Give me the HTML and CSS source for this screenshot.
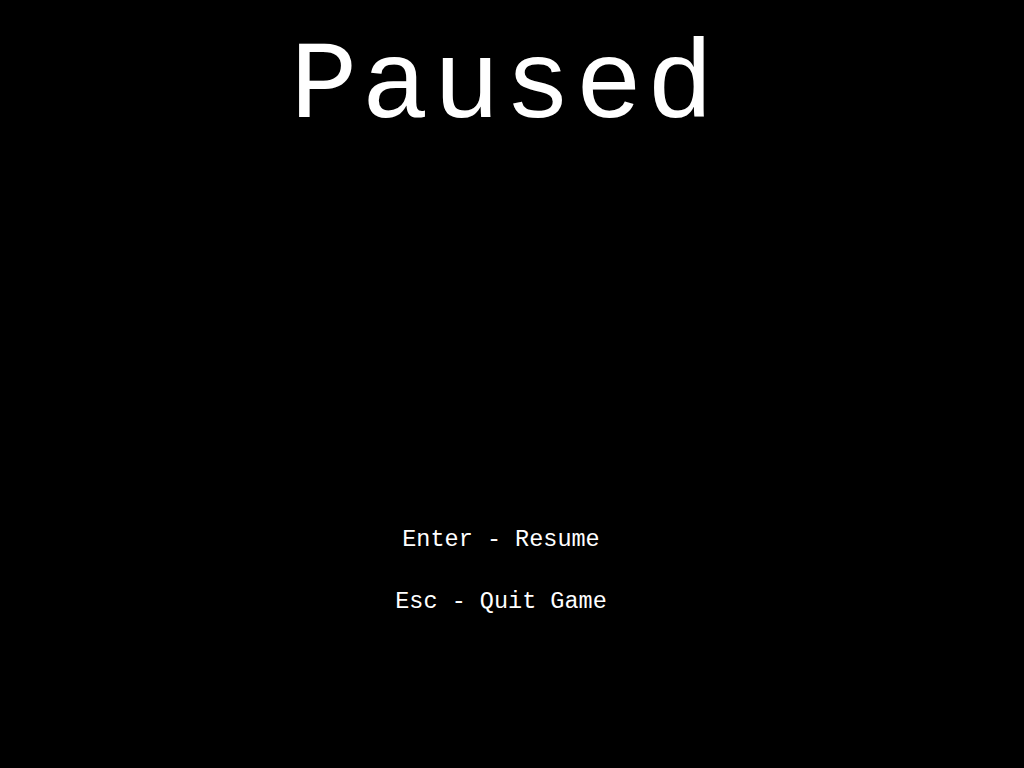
FILE: index.html
```html
<!DOCTYPE html>
<html lang="en">
<head>
<meta charset="utf-8">
<title>Paused</title>
<link rel="stylesheet" href="styles.css">
</head>
<body>
<main class="screen">
  <h1 class="title">Paused</h1>
  <ul class="menu">
    <li class="menu-item">Enter - Resume</li>
    <li class="menu-item">Esc - Quit Game</li>
  </ul>
</main>
</body>
</html>
```

FILE: styles.css
```css
html, body {
  margin: 0;
  padding: 0;
  background: #000;
  height: 100%;
}
.screen {
  display: flex;
  flex-direction: column;
  align-items: center;
  box-sizing: border-box;
  width: 1024px;
  height: 768px;
  padding-right: 22px;
  color: #fff;
  font-family: "Liberation Mono", "DejaVu Sans Mono", monospace;
  -webkit-font-smoothing: none;
}
.title {
  margin: 32px 0 0 0;
  padding-left: 6px;
  font-size: 112px;
  line-height: 1;
  letter-spacing: 4px;
  font-weight: normal;
}
.menu {
  list-style: none;
  margin: 384px 0 0 0;
  padding: 0;
  display: flex;
  flex-direction: column;
  align-items: center;
  gap: 38px;
}
.menu-item {
  font-size: 23.5px;
  line-height: 24px;
}
```
